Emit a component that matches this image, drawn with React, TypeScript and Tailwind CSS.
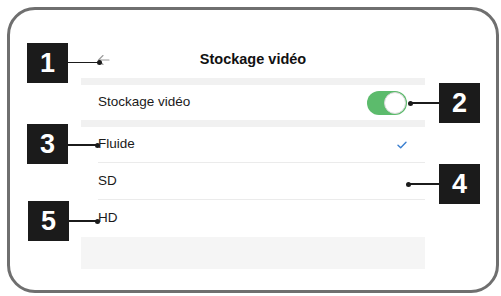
import React from "react";

const ui = { fontFamily: '"Liberation Sans", Arial, sans-serif' };

function Callout({
  n,
  boxLeft,
  boxTop,
  lineFrom,
  lineTo,
  lineY,
  dotX,
}: {
  n: string;
  boxLeft: number;
  boxTop: number;
  lineFrom: number;
  lineTo: number;
  lineY: number;
  dotX: number;
}) {
  return (
    <>
      <div
        className="absolute w-[41px] h-[40px] bg-[#1b1b1b] flex items-center justify-center text-white font-bold text-[27px] leading-none"
        style={{ left: boxLeft, top: boxTop, ...ui }}
      >
        {n}
      </div>
      <div
        className="absolute h-[1.5px] bg-[#1b1b1b]"
        style={{ left: lineFrom, top: lineY - 0.75, width: lineTo - lineFrom }}
      />
      <div
        className="absolute w-[5px] h-[5px] rounded-full bg-[#1b1b1b]"
        style={{ left: dotX - 2.5, top: lineY - 2.5 }}
      />
    </>
  );
}

export default function App() {
  return (
    <div className="relative w-[501px] h-[296px] bg-white overflow-hidden" style={ui}>
      <div className="absolute left-[7px] top-[7px] w-[492px] h-[286px] border-[3px] border-[#6f6f6f] rounded-[28px]" />
      <div className="pt-[42px] pl-[81px]">
        <div className="w-[344px] flex flex-col">
          {/* header */}
          <div className="relative h-[36px] flex items-center justify-center">
            <svg
              className="absolute left-[16px] top-[12px]"
              width="13"
              height="12"
              viewBox="0 0 13 12"
              fill="none"
              stroke="#9a9a9a"
              strokeWidth="1.1"
              strokeLinecap="round"
              strokeLinejoin="round"
            >
              <path d="M12 6H1.5M6 1.5L1.5 6L6 10.5" />
            </svg>
            <span className="text-[14.5px] font-bold text-[#111]">Stockage vidéo</span>
          </div>
          <div className="h-[7px] bg-[#f1f1f1]" />
          <div className="h-[35px] flex items-center justify-between pl-[17px] pr-[18px]">
            <span className="text-[13.5px] text-[#1a1a1a]">Stockage vidéo</span>
            <div className="w-[40px] h-[24px] rounded-full bg-[#5cbb6c] flex items-center justify-end pr-[1px]">
              <div className="w-[22px] h-[22px] rounded-full bg-white border border-[#d8d8d8]" />
            </div>
          </div>
          <div className="h-[7px] bg-[#f1f1f1]" />
          <div className="pl-[17px]">
            <div className="h-[36px] flex items-center justify-between pr-[18px] border-b border-[#ebebeb]">
              <span className="text-[13.5px] text-[#1a1a1a]">Fluide</span>
              <svg width="10" height="8" viewBox="0 0 10 8" fill="none" stroke="#3a7fd0" strokeWidth="1.4" strokeLinecap="round" strokeLinejoin="round">
                <path d="M1 4.2L3.7 6.8L9 1.2" />
              </svg>
            </div>
            <div className="h-[37px] flex items-center border-b border-[#ebebeb]">
              <span className="text-[13.5px] text-[#1a1a1a]">SD</span>
            </div>
            <div className="h-[37px] flex items-center">
              <span className="text-[13.5px] text-[#1a1a1a]">HD</span>
            </div>
          </div>
          <div className="h-[32px] bg-[#f5f5f5]" />
        </div>
      </div>

      <Callout n="1" boxLeft={27} boxTop={43} lineFrom={68} lineTo={99} lineY={62.5} dotX={99} />
      <Callout n="2" boxLeft={439} boxTop={83} lineFrom={410} lineTo={439} lineY={103} dotX={410} />
      <Callout n="3" boxLeft={27} boxTop={124} lineFrom={68} lineTo={97} lineY={145} dotX={97} />
      <Callout n="4" boxLeft={439} boxTop={164} lineFrom={408} lineTo={439} lineY={184} dotX={408} />
      <Callout n="5" boxLeft={28} boxTop={201} lineFrom={69} lineTo={97} lineY={221} dotX={97} />
    </div>
  );
}
